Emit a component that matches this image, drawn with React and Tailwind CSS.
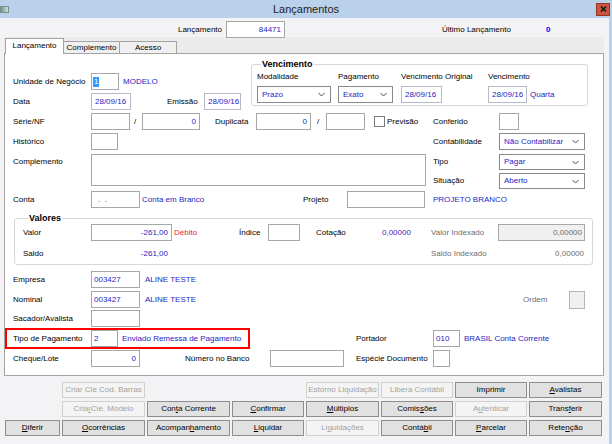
import React from "react";

const BLUE = "text-[#2626c4]";

const HS = {
  16: "h-[16px]",
  17: "h-[17px]",
  18: "h-[18px]",
  32: "h-[32px]",
};

function Box({ w, h = 17, className = "", children }) {
  return (
    <div
      className={`${HS[h]} ${w} shrink-0 border border-[#a7a7a7] flex items-center px-[3px] ${className}`}
    >
      {children}
    </div>
  );
}

function Select({ w, h = 17, value }) {
  return (
    <div
      className={`${HS[h]} ${w} shrink-0 border border-[#8a8a8a] bg-white flex items-center justify-between pl-[4px] pr-[5px] ${BLUE}`}
    >
      <span>{value}</span>
      <svg width="7" height="5" viewBox="0 0 7 5">
        <path d="M0.5 1 L3.5 4 L6.5 1" fill="none" stroke="#4a4a4a" strokeWidth="1" />
      </svg>
    </div>
  );
}

function Btn({ children, disabled }) {
  return (
    <div
      className={`h-[16px] flex items-center justify-center border whitespace-nowrap ${
        disabled
          ? "border-[#d0d0d0] bg-[#f4f4f4] text-[#a2a2a2]"
          : "border-[#8e8e8e] bg-[#e1e1e1] text-black"
      }`}
    >
      {children}
    </div>
  );
}

const U = ({ children }) => <u className="underline underline-offset-[1px]">{children}</u>;

export default function App() {
  return (
    <div className="w-[612px] h-[444px] overflow-hidden bg-[#f3f3f6] font-['Liberation_Sans',Arial,sans-serif] text-[8px] leading-[10px] text-black">
      {/* Title bar */}
      <div className="h-[18px] bg-[#b9d1ea] grid grid-cols-[1fr_auto_1fr] items-center">
        <div className="flex items-center">
          <div className="w-[9px] h-[7px] border border-[#7d8c8c] bg-gradient-to-r from-[#5aa08a] to-[#cfe0e0]" />
        </div>
        <div className="text-[11px] leading-[13px] text-[#1e1e1e]">Lançamentos</div>
        <div className="flex justify-end pr-[2px]">
          <div className="w-[14px] h-[13px] bg-[#c9543f] border border-[#9a3526] flex items-center justify-center">
            <svg width="7" height="6" viewBox="0 0 7 6">
              <path d="M1 0.5 L6 5.5 M6 0.5 L1 5.5" stroke="#1a1a1a" strokeWidth="1.6" />
            </svg>
          </div>
        </div>
      </div>

      <div className="h-[426px] border-r-[3px] border-[#b9d1ea]">
        {/* Lançamento header row */}
        <div className="h-[19px] pt-[3px] flex items-start">
          <div className="w-[226px] h-[17px] flex items-center justify-end pr-[4px]">Lançamento</div>
          <Box w="w-[59px]" className={`bg-white justify-end ${BLUE}`}>84471</Box>
          <div className="w-[157px]" />
          <div className="w-[104px] h-[17px] flex items-center">Último Lançamento</div>
          <div className="h-[17px] flex items-center font-bold text-[#0000ff]">0</div>
        </div>

        {/* Tabs */}
        <div className="ml-[4px] w-[600px] h-[16px] bg-[#ebebeb] flex items-end pl-[1px]">
          <div className="relative z-10 w-[59px] h-[16px] -mb-px bg-white border-l border-t border-r border-[#a3a3a3] flex items-center justify-center pb-[1px]">
            Lançamento
          </div>
          <div className="w-[56px] h-[12px] bg-[#f0f0f0] border-t border-r border-[#a3a3a3] flex items-center justify-center">
            Complemento
          </div>
          <div className="w-[57px] h-[12px] bg-[#f0f0f0] border-t border-r border-[#a3a3a3] flex items-center justify-center">
            Acesso
          </div>
        </div>

        {/* Panel */}
        <div className="relative ml-[4px] w-[600px] h-[323px] border border-[#a3a3a3] bg-white pl-[8px]">
          {/* Section A */}
          <div className="flex h-[56px]">
            <div className="w-[238px] pt-[19px] flex flex-col">
              <div className="flex items-center h-[17px]">
                <div className="w-[78px]">Unidade de Negócio</div>
                <Box w="w-[28px]" className="bg-white !pl-[1px]">
                  <span className="bg-[#3399ff] text-white px-[1px] leading-[10px]">1</span>
                </Box>
                <div className={`ml-[4px] ${BLUE}`}>MODELO</div>
              </div>
              <div className="flex items-center h-[17px] mt-[3px]">
                <div className="w-[78px]">Data</div>
                <Box w="w-[40px]" className={`bg-white border-[#b8b8c8] ${BLUE}`}>28/09/16</Box>
                <div className="w-[73px] pl-[36px]">Emissão</div>
                <Box w="w-[37px]" className={`bg-white border-[#b8b8c8] ${BLUE}`}>28/09/16</Box>
              </div>
            </div>
            <fieldset className="mt-[5px] w-[337px] self-start border border-[#d3d8dd] rounded-[3px] pl-[5px] pb-[2px]">
              <legend className="ml-[4px] px-[1px] font-bold text-[9px] leading-[11px]">Vencimento</legend>
              <div className="flex mt-[1px]">
                <div className="w-[81px] flex flex-col">
                  <div className="h-[12px] leading-[12px]">Modalidade</div>
                  <div className="mt-[3px]"><Select w="w-[74px]" value="Prazo" /></div>
                </div>
                <div className="w-[63px] flex flex-col">
                  <div className="h-[12px] leading-[12px]">Pagamento</div>
                  <div className="mt-[3px]"><Select w="w-[55px]" value="Exato" /></div>
                </div>
                <div className="w-[87px] flex flex-col">
                  <div className="h-[12px] leading-[12px]">Vencimento Original</div>
                  <div className="mt-[3px]">
                    <Box w="w-[41px]" className={`bg-white border-[#b8b8c8] ${BLUE}`}>28/09/16</Box>
                  </div>
                </div>
                <div className="flex flex-col">
                  <div className="h-[12px] leading-[12px]">Vencimento</div>
                  <div className="mt-[3px] flex items-center">
                    <Box w="w-[39px]" className={`bg-white border-[#b8b8c8] ${BLUE}`}>28/09/16</Box>
                    <span className={`ml-[3px] ${BLUE}`}>Quarta</span>
                  </div>
                </div>
              </div>
            </fieldset>
          </div>

          {/* Série/NF row */}
          <div className="flex items-center h-[17px] mt-[3px]">
            <div className="w-[78px]">Série/NF</div>
            <Box w="w-[39px]" className="bg-white" />
            <div className="w-[12px] pl-[4px]">/</div>
            <Box w="w-[58px]" className={`bg-white justify-end ${BLUE}`}>0</Box>
            <div className="w-[56px] pl-[15px]">Duplicata</div>
            <Box w="w-[55px]" className={`bg-white justify-end ${BLUE}`}>0</Box>
            <div className="w-[15px] pl-[6px]">/</div>
            <Box w="w-[39px]" className="bg-white" />
            <div className="w-[68px] pl-[9px] flex items-center">
              <div className="w-[11px] h-[11px] border border-[#7b7b7b] bg-white shrink-0" />
              <span className="ml-[2px]">Previsão</span>
            </div>
            <div className="w-[66px]">Conferido</div>
            <Box w="w-[20px]" className="bg-white" />
          </div>

          {/* Histórico row */}
          <div className="flex items-center h-[17px] mt-[3px]">
            <div className="w-[420px] flex items-center">
              <div className="w-[78px]">Histórico</div>
              <Box w="w-[27px]" className="bg-white" />
            </div>
            <div className="w-[66px]">Contabilidade</div>
            <Select w="w-[86px]" value="Não Contabilizar" />
          </div>

          {/* Complemento row */}
          <div className="flex h-[35px] mt-[4px]">
            <div className="w-[78px] pt-[3px]">Complemento</div>
            <Box w="w-[335px]" h={32} className="bg-white" />
            <div className="w-[7px]" />
            <div className="flex flex-col gap-[3px]">
              <div className="flex items-center">
                <div className="w-[66px]">Tipo</div>
                <Select w="w-[86px]" h={16} value="Pagar" />
              </div>
              <div className="flex items-center">
                <div className="w-[66px]">Situação</div>
                <Select w="w-[86px]" h={16} value="Aberto" />
              </div>
            </div>
          </div>

          {/* Conta row */}
          <div className="flex items-center h-[17px] mt-[2px]">
            <div className="w-[78px]">Conta</div>
            <Box w="w-[49px]" className="bg-white pl-[6px] text-[#2626c4]">. &nbsp;.</Box>
            <div className={`w-[163px] pl-[2px] ${BLUE}`}>Conta em Branco</div>
            <div className="w-[44px]">Projeto</div>
            <Box w="w-[78px]" className="bg-white" />
            <div className="w-[8px]" />
            <div className={BLUE}>PROJETO BRANCO</div>
          </div>

          {/* Valores */}
          <fieldset className="mt-[4px] ml-[1px] w-[579px] border border-[#d3d8dd] rounded-[3px] pl-[8px] pb-[2px]">
            <legend className="ml-[5px] px-[1px] font-bold text-[9px] leading-[12px]">Valores</legend>
            <div className="flex items-center h-[17px]">
              <div className="w-[68px]">Valor</div>
              <Box w="w-[81px]" className={`bg-white justify-end ${BLUE}`}>-261,00</Box>
              <div className="w-[67px] pl-[2px] text-[#e5283c]">Débito</div>
              <div className="w-[29px]">Índice</div>
              <Box w="w-[32px]" className="bg-white" />
              <div className="w-[82px] pl-[16px]">Cotação</div>
              <div className="w-[49px] text-[#4a22b8]">0,00000</div>
              <div className="w-[67px] text-[#6e6e6e]">Valor Indexado</div>
              <Box w="w-[87px]" className="bg-[#f0f0f0] justify-end text-[#6e6e6e] !pr-[2px]">0,00000</Box>
            </div>
            <div className="flex items-center h-[17px] mt-[4px]">
              <div className="w-[68px]">Saldo</div>
              <div className={`w-[81px] text-right pr-[4px] ${BLUE}`}>-261,00</div>
              <div className="w-[259px]" />
              <div className="w-[67px] text-[#6e6e6e]">Saldo Indexado</div>
              <div className="w-[87px] text-right pr-[1px] text-[#6e6e6e]">0,00000</div>
            </div>
          </fieldset>

          {/* Empresa */}
          <div className="flex items-center h-[17px] mt-[6px]">
            <div className="w-[78px]">Empresa</div>
            <Box w="w-[49px]" className={`bg-white !pl-[2px] ${BLUE}`}>003427</Box>
            <div className={`ml-[5px] ${BLUE}`}>ALINE TESTE</div>
          </div>

          {/* Nominal */}
          <div className="flex items-center h-[17px] mt-[3px]">
            <div className="w-[510px] flex items-center">
              <div className="w-[78px]">Nominal</div>
              <Box w="w-[49px]" className={`bg-white !pl-[2px] ${BLUE}`}>003427</Box>
              <div className={`ml-[5px] ${BLUE}`}>ALINE TESTE</div>
            </div>
            <div className="w-[46px] text-[#6e6e6e]">Ordem</div>
            <Box w="w-[16px]" h={18} className="bg-[#f0f0f0] border-[#b5b5b5]" />
          </div>

          {/* Sacador */}
          <div className="flex items-center h-[17px] mt-[2px]">
            <div className="w-[78px]">Sacador/Avalista</div>
            <Box w="w-[49px]" className="bg-white" />
          </div>

          {/* Tipo de Pagamento */}
          <div className="flex items-center h-[21px] mt-[1px] -ml-[8px]">
            <div className="w-[245px] h-[21px] border-2 border-[#ff0000] pl-[6px] flex items-center">
              <div className="w-[78px]">Tipo de Pagamento</div>
              <Box w="w-[27px]" className={`bg-white !pl-[2px] ${BLUE}`}>2</Box>
              <div className={`ml-[4px] ${BLUE} whitespace-nowrap`}>Enviado Remessa de Pagamento</div>
            </div>
            <div className="w-[106px]" />
            <div className="w-[77px]">Portador</div>
            <Box w="w-[27px]" className={`bg-white !pl-[2px] ${BLUE}`}>010</Box>
            <div className={`ml-[4px] ${BLUE}`}>BRASIL Conta Corrente</div>
          </div>

          {/* Cheque/Lote */}
          <div className="flex items-center h-[17px] mt-[1px]">
            <div className="w-[78px]">Cheque/Lote</div>
            <Box w="w-[49px]" className={`bg-white justify-end ${BLUE}`}>0</Box>
            <div className="w-[130px] pl-[45px]">Número no Banco</div>
            <Box w="w-[74px]" className="bg-white" />
            <div className="w-[89px] pl-[12px]">Espécie Documento</div>
            <Box w="w-[17px]" className="bg-white" />
          </div>
        </div>

        {/* Buttons */}
        <div className="mt-[6px] ml-[5px] grid grid-cols-[55px_83px_83px_72px_73px_72px_72px_73px] gap-x-[2px] gap-y-[3px]">
          <div />
          <Btn disabled>Criar Cle Cod. Barras</Btn>
          <div />
          <div />
          <Btn disabled>Estorno Liquidação</Btn>
          <Btn disabled>Libera Contábil</Btn>
          <Btn>Imprimir</Btn>
          <Btn><U>A</U>valistas</Btn>

          <div />
          <Btn disabled>Cria<U>r</U> Cle. Modelo</Btn>
          <Btn>Con<U>t</U>a Corrente</Btn>
          <Btn><U>C</U>onfirmar</Btn>
          <Btn><U>M</U>últiplos</Btn>
          <Btn>Comis<U>s</U>ões</Btn>
          <Btn disabled>A<U>u</U>tenticar</Btn>
          <Btn>Trans<U>f</U>erir</Btn>

          <Btn><U>D</U>iferir</Btn>
          <Btn><U>O</U>corrências</Btn>
          <Btn>Acompan<U>h</U>amento</Btn>
          <Btn><U>L</U>iquidar</Btn>
          <Btn disabled>Li<U>q</U>uidações</Btn>
          <Btn>Contá<U>b</U>il</Btn>
          <Btn><U>P</U>arcelar</Btn>
          <Btn>Rete<U>n</U>ção</Btn>
        </div>
      </div>
    </div>
  );
}
